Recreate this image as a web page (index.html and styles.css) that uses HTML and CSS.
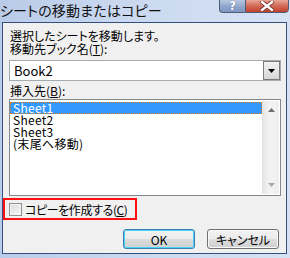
FILE: index.html
```html
<!DOCTYPE html>
<html lang="ja">
<head>
<meta charset="utf-8">
<link rel="stylesheet" href="styles.css">
</head>
<body>
<div class="window">
  <div class="titlebar">
    <span class="title">シートの移動またはコピー</span>
    <div class="caption">
      <div class="cap help">?</div>
      <div class="cap close"><svg width="14" height="10" viewBox="0 0 14 10"><path d="M2 1 L12 9 M12 1 L2 9" stroke="#6b2a22" stroke-width="4" stroke-linecap="square"/><path d="M2 1 L12 9 M12 1 L2 9" stroke="#fff" stroke-width="2.4" stroke-linecap="square"/></svg></div>
    </div>
  </div>
  <div class="content">
    <div class="label">選択したシートを移動します。</div>
    <div class="label">移動先ブック名(<u>T</u>):</div>
    <div class="combo">
      <span class="combo-text">Book2</span>
      <div class="combo-btn"><svg width="7" height="4" viewBox="0 0 7 4"><path d="M0 0 H7 L3.5 4 Z" fill="#000"/></svg></div>
    </div>
    <div class="label label-list">挿入先(<u>B</u>):</div>
    <div class="listbox">
      <div class="items">
        <div class="item selected">Sheet1</div>
        <div class="item">Sheet2</div>
        <div class="item">Sheet3</div>
        <div class="item">(末尾へ移動)</div>
      </div>
      <div class="scrollbar">
        <svg class="arrow" width="7" height="4" viewBox="0 0 7 4"><path d="M3.5 0 L7 4 H0 Z" fill="#6d6d6d"/></svg>
        <svg class="arrow" width="7" height="4" viewBox="0 0 7 4"><path d="M0 0 H7 L3.5 4 Z" fill="#a8a8a8"/></svg>
      </div>
    </div>
    <div class="copybox">
      <span class="check"></span>
      <span class="check-label">コピーを作成する(<u>C</u>)</span>
    </div>
    <div class="buttons">
      <div class="btn default">OK</div>
      <div class="btn">キャンセル</div>
    </div>
  </div>
</div>
</body>
</html>
```
FILE: styles.css
```css
html, body {
  margin: 0;
  padding: 0;
}
body {
  width: 290px;
  height: 258px;
  overflow: hidden;
  font-family: "Noto Sans CJK JP", "Noto Sans", sans-serif;
  font-feature-settings: "palt" 1;
  font-size: 12px;
  color: #000;
}
.window {
  width: 290px;
  height: 258px;
  box-sizing: border-box;
  background: linear-gradient(90deg, #b9cbe8 0%, #c9d8ef 40%, #d6e2f4 100%);
  padding: 0 3px 4px 2px;
  display: flex;
  flex-direction: column;
}
.titlebar {
  height: 22px;
  display: flex;
  align-items: flex-start;
  justify-content: space-between;
  flex: none;
}
.title {
  font-size: 14px;
  line-height: 20px;
  margin-left: -2px;
  letter-spacing: 0.2px;
  color: #111;
}
.caption {
  display: flex;
  margin-right: -2px;
  margin-top: -1px;
}
.cap {
  height: 14px;
  box-sizing: border-box;
  border: 1px solid #4e5c78;
  display: flex;
  align-items: center;
  justify-content: center;
  color: #fff;
  font-family: "DejaVu Sans", sans-serif;
  font-weight: bold;
  font-size: 12px;
  line-height: 12px;
}
.help {
  width: 26px;
  border-right: none;
  border-radius: 0 0 0 4px;
  background: linear-gradient(#b8c8e2, #8fa6cc 55%, #7f97c2);
  text-shadow: 0 0 1px #34466a;
}
.close {
  width: 44px;
  border-radius: 0 0 4px 0;
  background: linear-gradient(#e6a597, #d26a55 50%, #c0402c);
}
.content {
  flex: 1;
  border: 1px solid #34507e;
  background: #f0f0f0;
  padding: 6px 6px 4px 6px;
  display: flex;
  flex-direction: column;
}
.label {
  line-height: 13px;
  height: 13px;
  margin-left: 1px;
  white-space: nowrap;
}
.label u, .check-label u {
  text-underline-offset: 1px;
}
.combo {
  margin-top: 5px;
  height: 21px;
  width: 272px;
  box-sizing: border-box;
  border: 1px solid #a3acb3;
  background: #fff;
  display: flex;
  align-items: center;
  justify-content: space-between;
  padding: 1px 1px 1px 4px;
}
.combo-text {
  font-size: 13px;
  line-height: 15px;
}
.combo-btn {
  width: 17px;
  height: 19px;
  box-sizing: border-box;
  border: 1px solid #7a7a7a;
  background: linear-gradient(#f2f2f2, #e4e4e4 50%, #d6d6d6);
  display: flex;
  align-items: center;
  justify-content: center;
  margin-right: -1px;
  margin-top: -1px;
  margin-bottom: -1px;
}
.label-list {
  margin-top: 3px;
}
.listbox {
  margin-top: 2px;
  width: 272px;
  height: 97px;
  box-sizing: border-box;
  border: 1px solid #828790;
  background: #fff;
  display: flex;
  padding: 1px 1px 1px 0;
}
.items {
  flex: 1;
  padding-top: 1px;
}
.item {
  height: 12px;
  line-height: 12px;
  padding-left: 3px;
  font-size: 12px;
  letter-spacing: 0.3px;
  white-space: nowrap;
}
.item.selected {
  background: #3399ff;
  color: #fff;
  outline: 1px dotted #e57b17;
  outline-offset: -1px;
}
.scrollbar {
  width: 16px;
  background: linear-gradient(90deg, #e6e6e6, #f3f3f3 40%, #eeeeee);
  border-left: 1px solid #e2e2e2;
  display: flex;
  flex-direction: column;
  justify-content: space-between;
  align-items: center;
  padding: 7px 0 7px 0;
}
.copybox {
  margin-top: 2px;
  margin-left: -6px;
  width: 134px;
  height: 22px;
  box-sizing: border-box;
  border: 2px solid #ff1010;
  display: flex;
  align-items: center;
  padding-left: 4px;
}
.check {
  width: 13px;
  height: 13px;
  box-sizing: border-box;
  border: 1px solid #8f8f8f;
  background: linear-gradient(135deg, #dcdcdc, #f6f6f6);
  box-shadow: inset 0 0 0 1px #f4f4f4;
  margin-right: 3px;
}
.check-label {
  line-height: 13px;
  letter-spacing: -0.4px;
  white-space: nowrap;
}
.buttons {
  margin-top: 9px;
  display: flex;
  justify-content: flex-end;
  gap: 12px;
  padding-right: 1px;
}
.btn {
  width: 72px;
  height: 20px;
  box-sizing: border-box;
  border: 1px solid #707070;
  border-radius: 3px;
  background: linear-gradient(#f2f2f2, #ebebeb 50%, #dddddd 51%, #cfcfcf);
  display: flex;
  align-items: center;
  justify-content: center;
  line-height: 13px;
  box-shadow: inset 0 0 0 1px #fafafa;
}
.btn.default {
  border-color: #3c7fb1;
  box-shadow: inset 0 0 0 1px #48d3fb;
}
```
